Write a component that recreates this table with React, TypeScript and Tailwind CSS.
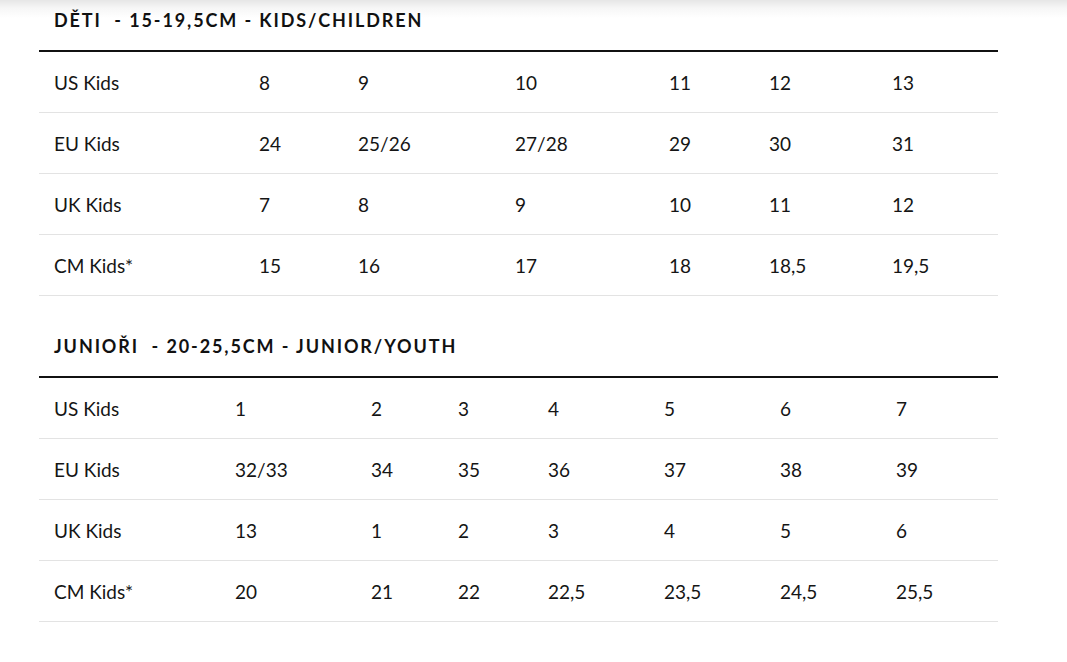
import React from "react";

const font = { fontFamily: "Lato, 'Open Sans', sans-serif" };

type Section = {
  title: string;
  cols: string;
  rows: string[][];
  first?: boolean;
};

const kids: Section = {
  title: "DĚTI  - 15-19,5CM - KIDS/CHILDREN",
  cols: "grid-cols-[205px_99px_157px_154px_100px_123px_121px]",
  first: true,
  rows: [
    ["US Kids", "8", "9", "10", "11", "12", "13"],
    ["EU Kids", "24", "25/26", "27/28", "29", "30", "31"],
    ["UK Kids", "7", "8", "9", "10", "11", "12"],
    ["CM Kids*", "15", "16", "17", "18", "18,5", "19,5"],
  ],
};

const juniors: Section = {
  title: "JUNIOŘI  - 20-25,5CM - JUNIOR/YOUTH",
  cols: "grid-cols-[181px_136px_87px_90px_116px_116px_116px_117px]",
  rows: [
    ["US Kids", "1", "2", "3", "4", "5", "6", "7"],
    ["EU Kids", "32/33", "34", "35", "36", "37", "38", "39"],
    ["UK Kids", "13", "1", "2", "3", "4", "5", "6"],
    ["CM Kids*", "20", "21", "22", "22,5", "23,5", "24,5", "25,5"],
  ],
};

function SizeTable({ s }: { s: Section }) {
  return (
    <div className={s.first ? "" : "mt-[30px]"}>
      <div className="h-[40px] flex items-center pl-[15px] mb-[10px]">
        <h2 className="text-[18px] font-bold tracking-[0.105em] text-[#111] whitespace-pre leading-none">
          {s.title}
        </h2>
      </div>
      <div className="border-t-2 border-[#111]">
        {s.rows.map((r, i) => (
          <div
            key={i}
            className={`grid ${s.cols} h-[61px] items-center border-b border-[#e3e3e3]`}
          >
            {r.map((c, j) => (
              <div key={j} className="pl-[15px] text-[19px] text-[#151515] leading-none">
                {c}
              </div>
            ))}
          </div>
        ))}
      </div>
    </div>
  );
}

export default function App() {
  return (
    <div
      className="w-[1067px] h-[662px] overflow-hidden bg-white bg-[linear-gradient(to_bottom,#e6e6e6_0px,#f6f6f6_8px,#ffffff_18px)]"
      style={font}
    >
      <div className="ml-[39px] w-[959px]">
        <SizeTable s={kids} />
        <SizeTable s={juniors} />
      </div>
    </div>
  );
}
